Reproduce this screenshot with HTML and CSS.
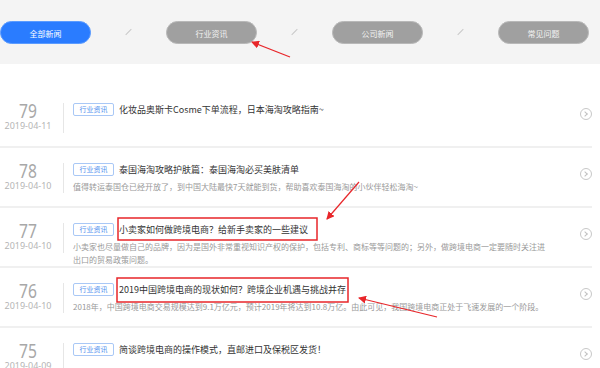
FILE: index.html
```html
<!DOCTYPE html>
<html>
<head>
    <title>新闻资讯</title>
    <link rel="stylesheet" href="styles.css">
</head>
<body>
    <div class="tabs">
        <a class="tab active">全部新闻</a>
        <span class="slash"></span>
        <a class="tab">行业资讯</a>
        <span class="slash"></span>
        <a class="tab">公司新闻</a>
        <span class="slash"></span>
        <a class="tab">常见问题</a>
    </div>

    <div class="list">
        <div class="item">
            <div class="when">
                <div class="num">79</div>
                <div class="date">2019-04-11</div>
            </div>
            <div class="bar"></div>
            <div class="body">
                <div class="head"><span class="tag">行业资讯</span><span class="title">化妆品奥斯卡Cosme下单流程，日本海淘攻略指南~</span></div>
            </div>
            <span class="go"></span>
        </div>
        <div class="item">
            <div class="when">
                <div class="num">78</div>
                <div class="date">2019-04-10</div>
            </div>
            <div class="bar"></div>
            <div class="body">
                <div class="head"><span class="tag">行业资讯</span><span class="title">泰国海淘攻略护肤篇：泰国海淘必买美肤清单</span></div>
                <p class="desc">值得转运泰国仓已经开放了，到中国大陆最快7天就能到货，帮助喜欢泰国海淘的小伙伴轻松海淘~</p>
            </div>
            <span class="go"></span>
        </div>
        <div class="item">
            <div class="when">
                <div class="num">77</div>
                <div class="date">2019-04-10</div>
            </div>
            <div class="bar"></div>
            <div class="body">
                <div class="head"><span class="tag">行业资讯</span><span class="title">小卖家如何做跨境电商？给新手卖家的一些建议</span></div>
                <p class="desc">小卖家也尽量做自己的品牌，因为是国外非常重视知识产权的保护，包括专利、商标等等问题的；另外，做跨境电商一定要随时关注进出口的贸易政策问题。</p>
            </div>
            <span class="go"></span>
        </div>
        <div class="item">
            <div class="when">
                <div class="num">76</div>
                <div class="date">2019-04-10</div>
            </div>
            <div class="bar"></div>
            <div class="body">
                <div class="head"><span class="tag">行业资讯</span><span class="title">2019中国跨境电商的现状如何？跨境企业机遇与挑战并存</span></div>
                <p class="desc">2018年，中国跨境电商交易规模达到9.1万亿元，预计2019年将达到10.8万亿。由此可见，我国跨境电商正处于飞速发展的一个阶段。</p>
            </div>
            <span class="go"></span>
        </div>
        <div class="item">
            <div class="when">
                <div class="num">75</div>
                <div class="date">2019-04-09</div>
            </div>
            <div class="bar"></div>
            <div class="body">
                <div class="head"><span class="tag">行业资讯</span><span class="title">简谈跨境电商的操作模式，直邮进口及保税区发货！</span></div>
            </div>
            <span class="go"></span>
        </div>
    </div>

    <!-- red marks drawn on top of the screenshot -->
    <svg class="marks" width="600" height="368" viewBox="0 0 600 368">
        <defs>
            <marker id="head" markerWidth="8" markerHeight="8" refX="7" refY="4" orient="auto" markerUnits="userSpaceOnUse">
                <path d="M0,0 L8,4 L0,8 Z" fill="#e8262a"/>
            </marker>
        </defs>
        <rect x="118" y="218" width="199" height="22" fill="none" stroke="#e8262a" stroke-width="1.5"/>
        <rect x="117" y="278" width="231" height="24" fill="none" stroke="#e8262a" stroke-width="1.5"/>
        <line x1="290" y1="57" x2="252" y2="42" stroke="#e8262a" stroke-width="1.2" marker-end="url(#head)"/>
        <line x1="359" y1="182" x2="327" y2="219" stroke="#e8262a" stroke-width="1.2" marker-end="url(#head)"/>
        <line x1="437" y1="317" x2="359" y2="298" stroke="#e8262a" stroke-width="1.2" marker-end="url(#head)"/>
    </svg>
</body>
</html>
```

FILE: styles.css
```css
body {
    margin: 0;
    font-family: "Noto Sans CJK SC", "Noto Sans", sans-serif;
    background: #fff;
    overflow: hidden;
}
.tabs {
    height: 64px;
    background: #f4f4f4;
    display: flex;
    align-items: center;
}
.tab {
    width: 91px;
    height: 23px;
    line-height: 23px;
    border-radius: 12px;
    background: #a0a0a0;
    color: #f2f2f2;
    font-size: 8px;
    text-align: center;
    box-sizing: border-box;
    border: 1px solid #b8b8b8;
}
.tab.active {
    background: #2a7cff;
    border-color: #5a9bff;
    color: #fff;
}
.slash {
    width: 75px;
    height: 8px;
    position: relative;
}
.slash::after {
    content: "";
    position: absolute;
    left: 37px;
    top: 0;
    width: 1px;
    height: 8px;
    background: #c8c8c8;
    transform: rotate(45deg);
}
.list {
    padding-top: 24px;
    margin-right: 8px;
}
.item {
    height: 60px;
    box-sizing: border-box;
    padding-top: 15px;
    border-bottom: 2px solid #f0f0f0;
    display: flex;
    align-items: flex-start;
}
.when {
    width: 56px;
    text-align: center;
}
.num {
    font-family: "Noto Sans", sans-serif;
    font-size: 20px;
    line-height: 16px;
    color: #a8a8a8;
    transform: scaleX(0.78);
}
.date {
    font-family: "Noto Sans", sans-serif;
    font-size: 9px;
    line-height: 12px;
    margin-top: 1px;
    color: #b5b5b5;
}
.bar {
    width: 1px;
    height: 30px;
    background: #e6e6e6;
    margin: 0 9px 0 7px;
}
.body {
    width: 478px;
}
.head {
    display: flex;
    align-items: center;
    height: 13px;
}
.tag {
    width: 41px;
    height: 13px;
    line-height: 11px;
    box-sizing: border-box;
    border: 1px solid #a9c8f6;
    border-radius: 2px;
    color: #4f90ee;
    font-size: 7px;
    text-align: center;
    margin-right: 5px;
}
.title {
    font-size: 9px;
    color: #333;
}
.desc {
    margin: 4px 0 0;
    font-size: 8px;
    line-height: 13px;
    color: #999;
}
.go {
    margin: 5px 0 0 auto;
    width: 12px;
    height: 12px;
    box-sizing: border-box;
    border: 1px solid #c8c8c8;
    border-radius: 50%;
    position: relative;
}
.go::after {
    content: "";
    position: absolute;
    left: 2px;
    top: 3px;
    width: 3px;
    height: 3px;
    border-top: 1px solid #c0c0c0;
    border-right: 1px solid #c0c0c0;
    transform: rotate(45deg);
}
.marks {
    position: absolute;
    left: 0;
    top: 0;
    pointer-events: none;
}
```
